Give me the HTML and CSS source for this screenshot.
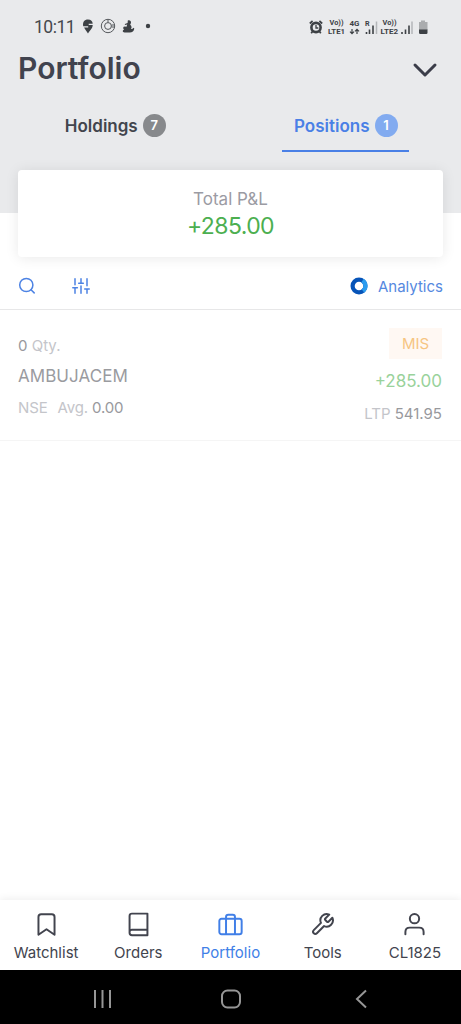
FILE: index.html
```html
<!DOCTYPE html>
<html lang="en">
<head>
<meta charset="utf-8">
<title>Portfolio</title>
<link rel="stylesheet" href="styles.css">
</head>
<body>
<div class="app">
  <header class="header">
    <div class="status">
      <span class="clock">10:11</span>
      <svg class="notices" width="72" height="18" viewBox="82 18 72 18" fill="none">
        <path d="M88 33.500c-1.500-2.500-3.200-4.400-3.900-6h4.100v-1.300h-5c-.8-4.200 1.200-6.700 4.800-6.700 2.900 0 4.700 1.900 4.700 4.300h-4v1.200h4C92.700 28.400 89.500 31 88 33.500z" fill="#3d4145"/>
        <g stroke="#55585c" stroke-width="1"><circle cx="108" cy="26" r="6.700"/><circle cx="108" cy="26" r="3.400"/><path d="M108 19.500v3M111.500 25h3M111.500 27h3"/></g>
        <path d="M127.800 20.600c1.500-1.100 3.500.2 3.200 2-.1 1-.6 1.500-.8 2.100 1.600 1.400 1.700 3.100.8 4.300 1 .3 1.900-.2 2.200-1.200l1.100.6c-.3 2.500-2 4-4.500 4h-5.200c-2.400 0-2.400-2.400-.4-2.900-1.600-.8-1.300-3 .7-3l1.600.2.700-2.100-2.300.4v-1l2.700-1z" fill="#3d4145"/>
        <circle cx="148" cy="26" r="2.200" fill="#3d4145"/>
      </svg>
      <svg class="signals" width="122" height="20" viewBox="308 16 122 20" fill="none">
        <g stroke="#3d4145"><circle cx="316" cy="26.500" r="4.600" stroke-width="2.600"/><path d="M309.800 22.500l2.800-2.500M322.200 22.500l-2.800-2.500M312.500 30.500l-1.300 1.800M319.500 30.500l1.300 1.800" stroke-width="1.700"/><path d="M316 24v3h2.300" stroke-width="1.300"/></g>
        <g class="signal-text" fill="#3d4145">
          <text x="329.500" y="24" textLength="14" lengthAdjust="spacingAndGlyphs">Vo))</text><text x="328" y="33" textLength="17" lengthAdjust="spacingAndGlyphs">LTE1</text>
          <text x="349.500" y="25" textLength="10" lengthAdjust="spacingAndGlyphs">4G</text><text x="365" y="24.700">R</text>
          <text x="382.500" y="24" textLength="14" lengthAdjust="spacingAndGlyphs">Vo))</text><text x="380.500" y="33" textLength="17.500" lengthAdjust="spacingAndGlyphs">LTE2</text>
        </g>
        <path d="M352 28v4.500M350 30.700l2 2 2-2M357 33v-4.500M355 30.300l2-2 2 2" stroke="#3d4145" stroke-width="1.200"/>
        <path d="M366.500 31v2M369.500 28.500V33M373 24.500V33M402 31v2M405.500 28.500V33M409 24.500V33" stroke="#3d4145" stroke-width="1.600"/>
        <path d="M376.500 20.500V33M412 20.500V33" stroke="#b4b6b9" stroke-width="1.500"/>
        <path d="M419 21h2v-1.500h4V21h2.500v8H419z" fill="#aaacae"/><path d="M419 28.500h8.500v3.300q0 1.200-1.200 1.200h-6.100q-1.200 0-1.200-1.200z" fill="#3d4145"/>
      </svg>
    </div>
    <div class="titlebar">
      <h1 class="title">Portfolio</h1>
      <svg class="chevron" width="26" height="16" viewBox="0 0 26 16"><path d="M3 3l10 10L23 3" fill="none" stroke="#3b3d49" stroke-width="3" stroke-linecap="round" stroke-linejoin="round"/></svg>
    </div>
    <nav class="tabs">
      <a class="tab"><span class="tab-label">Holdings</span><span class="count">7</span></a>
      <a class="tab active"><span class="tab-label">Positions</span><span class="count">1</span></a>
    </nav>
  </header>
  <section class="summary">
    <div class="summary-label">Total P&amp;L</div>
    <div class="summary-value">+285.00</div>
  </section>
  <div class="toolbar">
    <svg width="18" height="18" viewBox="0 0 18 18" fill="none" stroke="#4d83e4" stroke-width="1.500" stroke-linecap="round"><circle cx="8.300" cy="8" r="6.600"/><path d="M13 12.700l3.200 3.200"/></svg>
    <svg class="filter" width="18" height="18" viewBox="0 0 18 18" fill="none" stroke="#4d83e4" stroke-width="1.500" stroke-linecap="round"><path d="M3 1.800v6M.8 10.800h4.600M3 10.800v5.400M9 1.800v4.400M6.700 6.200h4.600M9 9v7.200M15 1.800v7M12.700 12h4.600M15 12v4.200"/></svg>
    <a class="analytics"><svg width="18" height="18" viewBox="0 0 18 18" fill="none" stroke-width="4.200"><circle cx="9" cy="9" r="6.400" stroke="#0754b8"/><path d="M12.500 3.600A6.400 6.400 0 0 1 13 14" stroke="#2b9cef"/></svg><span class="analytics-label">Analytics</span></a>
  </div>
  <main class="position">
    <div class="details">
      <div class="qty"><b>0</b> Qty.</div>
      <div class="symbol">AMBUJACEM</div>
      <div class="average"><span>NSE</span><span>Avg. <b>0.00</b></span></div>
    </div>
    <div class="values">
      <div class="product">MIS</div>
      <div class="gain">+285.00</div>
      <div class="ltp">LTP <b>541.95</b></div>
    </div>
  </main>
  <nav class="bottom">
    <a class="item"><svg viewBox="0 0 28 28"><path d="M5 25.500V5.500Q5 2.500 8 2.500h12q3 0 3 3v20l-9-6.200z"/></svg><span>Watchlist</span></a>
    <a class="item"><svg viewBox="0 0 28 28"><path d="M24 1.800H6.700Q4 1.800 4 4.500v18.800Q4 26 6.700 26H24zM4 22.500q0-2.700 2.700-2.700H24"/></svg><span>Orders</span></a>
    <a class="item current"><svg viewBox="0 0 28 28"><rect x="1.500" y="7.500" width="25" height="17.500" rx="2.500"/><path d="M9 24.500V5.500Q9 3 11.500 3h5Q19 3 19 5.500v19"/></svg><span>Portfolio</span></a>
    <a class="item"><svg class="wrench" viewBox="0 0 24 24"><path d="M14.700 6.300a1 1 0 0 0 0 1.400l1.600 1.600a1 1 0 0 0 1.400 0l3.770-3.770a6 6 0 0 1-7.940 7.940l-6.910 6.910a2.120 2.120 0 0 1-3-3l6.910-6.910a6 6 0 0 1 7.940-7.940z"/></svg><span>Tools</span></a>
    <a class="item"><svg viewBox="0 0 28 28"><circle cx="14" cy="7.500" r="5.200"/><path d="M3.800 25v-2.500q0-5 5-5h10.400q5 0 5 5V25"/></svg><span>CL1825</span></a>
  </nav>
  <div class="system">
    <svg width="20" height="20" viewBox="0 0 20 20"><path d="M2 1v18M9.500 1v18M17 1v18"/></svg>
    <svg class="home" width="22" height="20" viewBox="0 0 22 20"><rect x="2" y="1.500" width="18" height="17" rx="5.500"/></svg>
    <svg width="14" height="20" viewBox="0 0 14 20"><path d="M12 1.500L3 10l9 8.500"/></svg>
  </div>
</div>
</body>
</html>
```
FILE: styles.css
```css
* { box-sizing: border-box; }
body { margin: 0; background: #fff; font-family: Inter, Roboto, sans-serif; }
b { font-weight: 400; }
.app { width: 461px; height: 1024px; display: flex; flex-direction: column; overflow: hidden; }
.header { height: 213px; flex: none; background: #e9eaec; }
.status { height: 47px; padding: 6px 31px 0 34px; display: flex; align-items: center; color: #45484c; }
.clock { width: 48px; font: 17.5px/20px Roboto, sans-serif; letter-spacing: -.5px; }
.notices { margin-top: 1px; }
.signals { margin-left: auto; }
.signal-text { font: 700 7.2px Roboto, sans-serif; }
.titlebar { height: 44px; padding: 0 22px 0 18px; display: flex; align-items: center; justify-content: space-between; }
.chevron { margin-right: 1px; margin-top: 2px; }
.title { margin: 0 0 2px; color: #41434e; font-size: 30px; font-weight: 600; line-height: 36px; }
.tabs { display: grid; grid-template-columns: 1fr 1fr; justify-items: center; height: 61px; }
.tab { width: 127px; height: 61px; padding-top: 18px; display: flex; justify-content: center; gap: 5px; color: #42454d; border-bottom: 2px solid transparent; }
.tab-label { font-size: 17px; font-weight: 600; line-height: 34px; }
.tab.active { color: #4a80e6; border-color: #4a80e6; }
.count { width: 23px; height: 23px; margin-top: 5px; border-radius: 50%; background: #87898c; color: #fff; text-align: center; font-size: 13px; font-weight: 600; line-height: 23px; }
.active .count { background: #82abf0; }
.summary { position: relative; height: 87px; flex: none; margin: -43px 18px 0; padding-top: 18px; border-radius: 4px; background: #fff; box-shadow: 0 1px 14px rgba(0,0,0,.09); text-align: center; }
.summary-label { color: #9b9ba3; font-size: 17px; line-height: 22px; }
.summary-value { color: #4caf50; font-size: 23px; line-height: 32px; letter-spacing: -.6px; }
.toolbar { height: 53px; flex: none; padding: 5px 18px 0; display: flex; align-items: center; border-bottom: 1px solid #e7e7e8; }
.filter { margin-left: 36px; }
.analytics { margin-left: auto; display: flex; align-items: center; gap: 10px; color: #5689df; font-size: 15px; }
.analytics-label { line-height: 20px; padding-top: 2px; }
.position { height: 131px; flex: none; padding: 0 19px 0 18px; display: flex; justify-content: space-between; border-bottom: 1px solid #f5f5f5; color: #c4c5ca; font-size: 15px; line-height: 20px; }
.position b { color: #98999d; }
.details { padding-top: 26px; }
.symbol { margin-top: 8px; color: #9a9b9f; font-size: 17px; line-height: 24px; letter-spacing: .05px; }
.average { margin-top: 10px; display: flex; gap: 10px; letter-spacing: -.15px; }
.values { padding-top: 18px; display: flex; flex-direction: column; align-items: flex-end; }
.product { width: 53px; height: 31px; background: #fff8f3; color: #f6c582; text-align: center; line-height: 31px; }
.gain { margin-top: 11px; color: #99d29b; font-size: 17px; line-height: 22px; }
.ltp { margin-top: 11px; padding-top: 1px; }
.bottom { height: 70px; flex: none; margin-top: auto; display: grid; grid-template-columns: repeat(5, 1fr); background: #fff; box-shadow: 0 -1px 8px rgba(0,0,0,.07); }
.item { padding-top: 12px; display: flex; flex-direction: column; align-items: center; color: #42444e; font-size: 15px; line-height: 20px; }
.item svg { width: 25px; height: 25px; fill: none; stroke: currentColor; stroke-width: 2.2; stroke-linecap: round; stroke-linejoin: round; }
.item .wrench { stroke-width: 1.9; }
.item span { margin-top: 6px; }
.item.current { color: #417fe7; }
.system { height: 54px; flex: none; background: #000; display: flex; align-items: center; padding: 3px 93px 0; justify-content: space-between; }
.system svg { fill: none; stroke: #969696; stroke-width: 2; }
.home { margin-right: 5px; }
```
